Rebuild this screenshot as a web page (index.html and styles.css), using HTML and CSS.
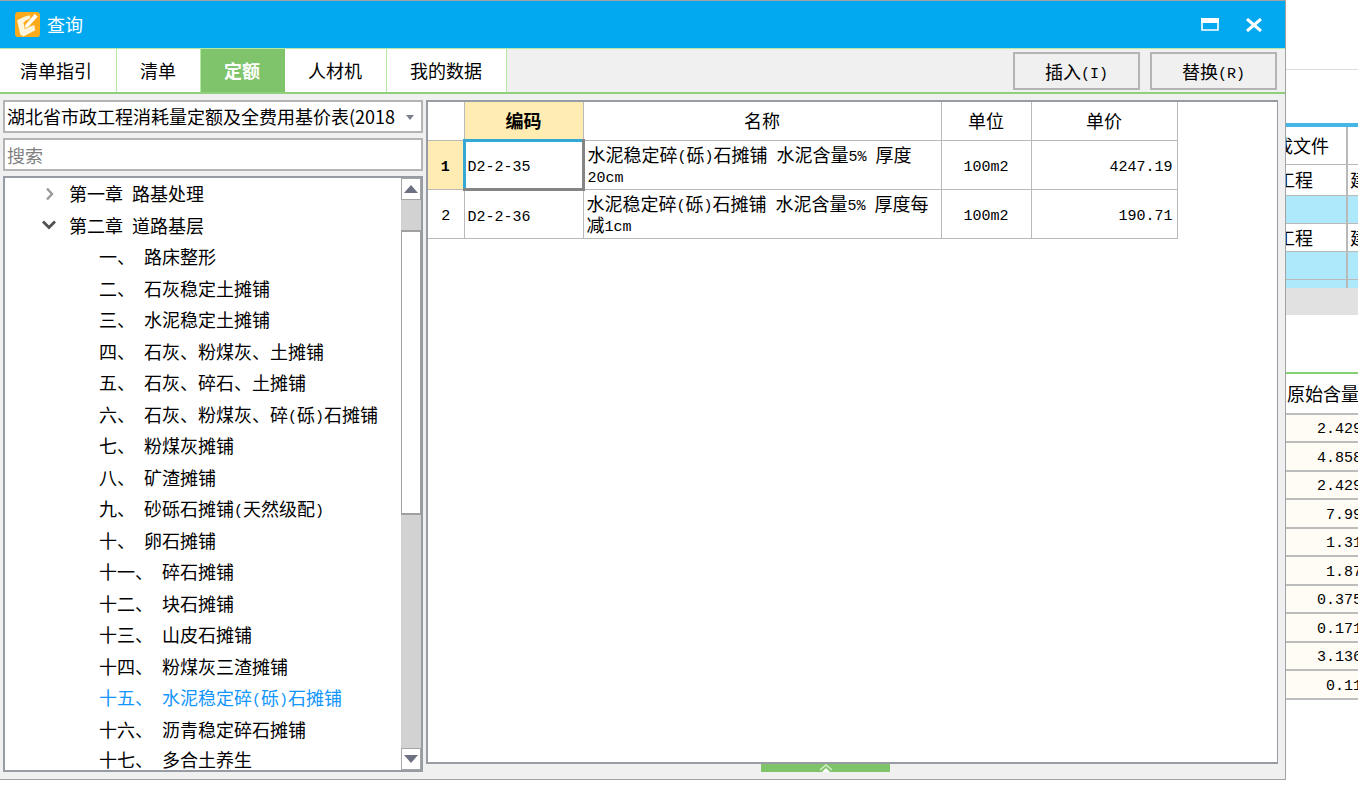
FILE: index.html
```html
<!DOCTYPE html>
<html lang="zh-CN">
<head>
<meta charset="utf-8">
<title>查询</title>
<link rel="stylesheet" href="styles.css">
</head>
<body>
<div class="screen">
  <main class="dialog">
    <header class="titlebar">
      <svg class="logo" viewBox="0 0 24 24" aria-hidden="true">
        <rect width="24" height="24" rx="3" fill="#fbaa19"/>
        <path d="M2 8 9 4.500 14 3l1 3-5 2.500-2 2 2 5 8.500-3 1 5-11.500 6-3-2z" fill="#fff4dc"/>
        <path d="M9.500 12.500 19 1.500l3 3-9 10-3.500 1.500z" fill="#fff" stroke="#fbaa19" stroke-width=".7"/>
      </svg>
      <h1 class="title">查询</h1>
      <button class="winbtn" type="button" aria-label="最大化">
        <svg width="18" height="14" viewBox="0 0 18 14"><path d="M1 1h16v11H1z" fill="none" stroke="#fff" stroke-width="1.600"/><path d="M0 0h18v5H0z" fill="#fff"/></svg>
      </button>
      <button class="winbtn" type="button" aria-label="关闭">
        <svg width="18" height="14" viewBox="0 0 18 14"><path d="M2 1l14 12M16 1L2 13" fill="none" stroke="#fff" stroke-width="3"/></svg>
      </button>
    </header>
    <nav class="toolbar">
      <button class="tab" type="button">清单指引</button>
      <button class="tab" type="button">清单</button>
      <button class="tab active" type="button">定额</button>
      <button class="tab" type="button">人材机</button>
      <button class="tab" type="button">我的数据</button>
      <div class="actions">
        <button class="action" type="button">插入<span class="lat">(I)</span></button>
        <button class="action" type="button">替换<span class="lat">(R)</span></button>
      </div>
    </nav>
    <div class="body">
      <section class="side">
        <div class="combo">
          <select class="field" aria-label="定额库"><option>湖北省市政工程消耗量定额及全费用基价表(2018</option></select>
          <svg class="caret" width="8" height="5" viewBox="0 0 8 5"><path d="M0 0h8L4 5z" fill="#7b7f8c"/></svg>
        </div>
        <input class="field" type="text" placeholder="搜索" aria-label="搜索">
        <div class="treebox">
          <ul class="tree">
            <li class="chapter"><svg class="arrow" viewBox="0 0 14 14"><path d="M5 1.500l5 5.500-5 5.500" fill="none" stroke="#9a9a9a" stroke-width="2.400"/></svg><span>第一章</span><span>路基处理</span></li>
            <li class="chapter"><svg class="arrow" viewBox="0 0 14 14"><path d="M1 3.500l6 6 6-6" fill="none" stroke="#505050" stroke-width="2.800"/></svg><span>第二章</span><span>道路基层</span></li>
            <li class="item"><span>一、</span><span>路床整形</span></li>
            <li class="item"><span>二、</span><span>石灰稳定土摊铺</span></li>
            <li class="item"><span>三、</span><span>水泥稳定土摊铺</span></li>
            <li class="item"><span>四、</span><span>石灰、粉煤灰、土摊铺</span></li>
            <li class="item"><span>五、</span><span>石灰、碎石、土摊铺</span></li>
            <li class="item"><span>六、</span><span>石灰、粉煤灰、碎<span class="lat">(</span>砾<span class="lat">)</span>石摊铺</span></li>
            <li class="item"><span>七、</span><span>粉煤灰摊铺</span></li>
            <li class="item"><span>八、</span><span>矿渣摊铺</span></li>
            <li class="item"><span>九、</span><span>砂砾石摊铺<span class="lat">(</span>天然级配<span class="lat">)</span></span></li>
            <li class="item"><span>十、</span><span>卵石摊铺</span></li>
            <li class="item"><span>十一、</span><span>碎石摊铺</span></li>
            <li class="item"><span>十二、</span><span>块石摊铺</span></li>
            <li class="item"><span>十三、</span><span>山皮石摊铺</span></li>
            <li class="item"><span>十四、</span><span>粉煤灰三渣摊铺</span></li>
            <li class="item current"><span>十五、</span><span>水泥稳定碎<span class="lat">(</span>砾<span class="lat">)</span>石摊铺</span></li>
            <li class="item"><span>十六、</span><span>沥青稳定碎石摊铺</span></li>
            <li class="item"><span>十七、</span><span>多合土养生</span></li>
          </ul>
          <div class="scroll">
            <button class="step" type="button" aria-label="向上"><svg width="14" height="8" viewBox="0 0 14 8"><path d="M0 8h14L7 0z" fill="#6d7080"/></svg></button>
            <div class="gap"></div>
            <div class="thumb"></div>
            <div class="rest"></div>
            <button class="step" type="button" aria-label="向下"><svg width="14" height="8" viewBox="0 0 14 8"><path d="M0 0h14L7 8z" fill="#6d7080"/></svg></button>
          </div>
        </div>
      </section>
      <section class="main">
        <div class="panel">
          <table class="grid">
            <colgroup><col class="c-no"><col class="c-code"><col class="c-name"><col class="c-unit"><col class="c-price"></colgroup>
            <thead>
              <tr><th></th><th class="hot">编码</th><th>名称</th><th>单位</th><th>单价</th></tr>
            </thead>
            <tbody>
              <tr>
                <td class="no hot"><span class="lat">1</span></td>
                <td class="code focus"><span class="lat">D2-2-35</span></td>
                <td class="name">水泥稳定碎<span class="lat">(</span>砾<span class="lat">)</span>石摊铺<span class="lat"> </span>水泥含量<span class="lat">5% </span>厚度<br><span class="lat">20cm</span></td>
                <td class="unit"><span class="lat">100m2</span></td>
                <td class="price"><span class="lat">4247.19</span></td>
              </tr>
              <tr>
                <td class="no"><span class="lat">2</span></td>
                <td class="code"><span class="lat">D2-2-36</span></td>
                <td class="name">水泥稳定碎<span class="lat">(</span>砾<span class="lat">)</span>石摊铺<span class="lat"> </span>水泥含量<span class="lat">5% </span>厚度每<br>减<span class="lat">1cm</span></td>
                <td class="unit"><span class="lat">100m2</span></td>
                <td class="price"><span class="lat">190.71</span></td>
              </tr>
            </tbody>
          </table>
        </div>
        <button class="drawer" type="button" aria-label="展开">
          <svg width="14" height="8" viewBox="0 0 14 8"><path d="M1 6l6-5 6 5" fill="none" stroke="#d5f0cc" stroke-width="1.500"/><path d="M3 8l4-4 4 4z" fill="#fff"/></svg>
        </button>
      </section>
    </div>
  </main>
  <aside class="behind">
    <div class="ribbon"></div>
    <div class="spacer"></div>
    <table class="files">
      <colgroup><col class="f-a"><col class="f-b"></colgroup>
      <tr class="head"><th>成文件</th><th></th></tr>
      <tr><td>工程</td><td>建</td></tr>
      <tr class="blue"><td></td><td></td></tr>
      <tr><td>工程</td><td>建</td></tr>
      <tr class="blue"><td></td><td></td></tr>
      <tr class="blue last"><td></td><td></td></tr>
    </table>
    <div class="hbar"></div>
    <table class="amounts">
      <thead><tr><th>原始含量</th></tr></thead>
      <tbody>
        <tr><td>2.429</td></tr>
        <tr><td>4.858</td></tr>
        <tr><td>2.429</td></tr>
        <tr><td>7.99</td></tr>
        <tr><td>1.31</td></tr>
        <tr><td>1.87</td></tr>
        <tr><td>0.375</td></tr>
        <tr><td>0.171</td></tr>
        <tr><td>3.136</td></tr>
        <tr><td>0.11</td></tr>
      </tbody>
    </table>
  </aside>
</div>
</body>
</html>
```
FILE: styles.css
```css
* { box-sizing: border-box; }

body {
  margin: 0;
  background: #fff;
  color: #000;
  font: 18px/21px "Noto Sans CJK SC", sans-serif;
}

button, select, input { font: inherit; color: inherit; border-radius: 0; }
button { padding: 0; border: 0; background: none; }
svg { display: block; }

.lat {
  font-family: "Liberation Mono", monospace;
  font-size: 15px;
  line-height: 1;
  vertical-align: 1px;
  white-space: pre;
}

.screen {
  display: flex;
  min-height: 100vh;
  padding-bottom: 32px;
  overflow: hidden;
}

/* Dialog */
.dialog {
  flex: 1;
  min-width: 0;
  display: flex;
  flex-direction: column;
  border: 1px solid #a0a2a5;
  border-left: 0;
  background: #f0f0f0;
}

.titlebar {
  display: flex;
  align-items: center;
  height: 47px;
  padding: 0 22px 0 15px;
  background: #02a9f1;
  color: #fff;
}
.logo { width: 25px; height: 25px; margin-right: 7px; }
.title { flex: 1; margin: 0; font-size: 18px; font-weight: 400; }
.winbtn { margin-left: 26px; }

.toolbar {
  display: flex;
  height: 46px;
  border-top: 1px solid #b5eaa6;
  border-bottom: 2px solid #8fcf7e;
}
.tab {
  padding: 0 24px 0 23px;
  border-right: 1px solid #b5eaa6;
  background: #fff;
}
.tab:first-child { padding-left: 20px; }
.tab.active { background: #7fc36a; color: #fff; font-weight: 700; border-color: #7fc36a; }
.actions { display: flex; gap: 10px; margin-left: auto; padding: 3px 8px 2px 0; }
.action { width: 127px; border: 2px solid #b4b4b4; background: #f0f0f0; }

.body {
  flex: 1;
  display: flex;
  gap: 3px;
  padding: 6px 7px 7px 3px;
}

/* Left side */
.side { width: 420px; display: flex; flex-direction: column; gap: 5px; }
.combo { position: relative; }
.field {
  display: block;
  appearance: none;
  width: 100%;
  height: 33px;
  padding: 0 20px 0 2px;
  border: 2px solid #b4b4b4;
  background: #fff;
  outline: 0;
}
.field::placeholder { color: #808080; opacity: 1; }
.caret { position: absolute; right: 9px; top: 15px; }

.treebox {
  flex: 1;
  display: flex;
  border: 2px solid #979ba3;
  background: #fff;
}
.tree { flex: 1; margin: 0; padding: 0; list-style: none; }
.tree li { display: flex; align-items: center; gap: 9px; height: 31px; white-space: nowrap; }
.tree li:nth-child(even) { height: 32px; }
.tree li:last-child { height: 25px; align-items: flex-end; }
.chapter { padding-left: 37px; }
.arrow { width: 14px; height: 14px; margin-right: 4px; }
.item { padding-left: 94px; }
.current { color: #1296fa; }

.scroll { width: 20px; display: flex; flex-direction: column; background: #d2d2d2; }
.step {
  display: grid;
  place-items: center;
  height: 22px;
  border: 1px solid #a6a6a6;
  background: #fff;
}
.gap { flex: 30; }
.thumb { flex: 285; border: solid #a0a0a0; border-width: 2px 1px; background: #fff; }
.rest { flex: 236; }

/* Result grid */
.main { flex: 1; min-width: 0; display: flex; flex-direction: column; }
.panel { flex: 1; border: 2px solid #979ba3; border-right-width: 1px; background: #fff; }
.grid { width: 749px; table-layout: fixed; border-collapse: collapse; }
.c-no { width: 36px; }
.c-code { width: 119px; }
.c-name { width: 358px; }
.c-unit { width: 90px; }
.c-price { width: 146px; }
.grid th, .grid td { padding: 0; border: 1px solid #b9b9b9; text-align: center; }
.grid tr > :first-child { border-left: 0; }
.grid thead th { height: 38px; border-top: 0; font-weight: 400; }
.grid tbody td { height: 49px; line-height: 20px; }
.grid .hot { background: #feecb3; font-weight: 700; }
.grid .code, .grid .name { padding-left: 3px; text-align: left; white-space: nowrap; }
.grid .price { padding-right: 4px; text-align: right; }
.grid .focus { border: 3px solid #858585; border-top-color: #35a8d6; border-left-color: #35a8d6; padding-left: 2px; }

.drawer {
  display: grid;
  place-items: center;
  width: 129px;
  height: 8px;
  margin-left: 335px;
  background: #7fc36a;
}

/* Application behind the dialog */
.behind { width: 72px; overflow: hidden; }
.ribbon { height: 70px; border-bottom: 1px solid #dcdcdc; }
.spacer { height: 53px; }
.files, .amounts { table-layout: fixed; border-collapse: collapse; }
.files { width: 174px; margin-left: -13px; border-top: 4px solid #45b6e6; }
.f-a { width: 73px; }
.f-b { width: 101px; }
.files th, .files td {
  height: 28px;
  padding: 0 0 0 2px;
  border: 1px solid #b9b9b9;
  border-width: 1px 2px;
  text-align: left;
  font-weight: 400;
}
.files .head th { height: 39px; padding-left: 0; border-top: 0; }
.files tr:nth-child(2) td { height: 31px; }
.files .blue td { background: #aee8fb; }
.files .last td { height: 9px; border-bottom: 0; }
.hbar { height: 27px; margin-bottom: 57px; background: #e1e1e1; }

.amounts { width: 82px; border-top: 2px solid #84cf72; }
.amounts th {
  height: 41px;
  padding: 0 0 0 1px;
  border-bottom: 2px solid #bdbdbd;
  text-align: left;
  font-weight: 400;
  white-space: nowrap;
}
.amounts td {
  height: 28px;
  padding: 4px 6px 0 0;
  border-bottom: 2px solid #bdbdbd;
  background: #fffcf6;
  text-align: right;
  font: 15px/20px "Liberation Mono", monospace;
}
.amounts tr:nth-child(even) td { height: 29px; }
```
